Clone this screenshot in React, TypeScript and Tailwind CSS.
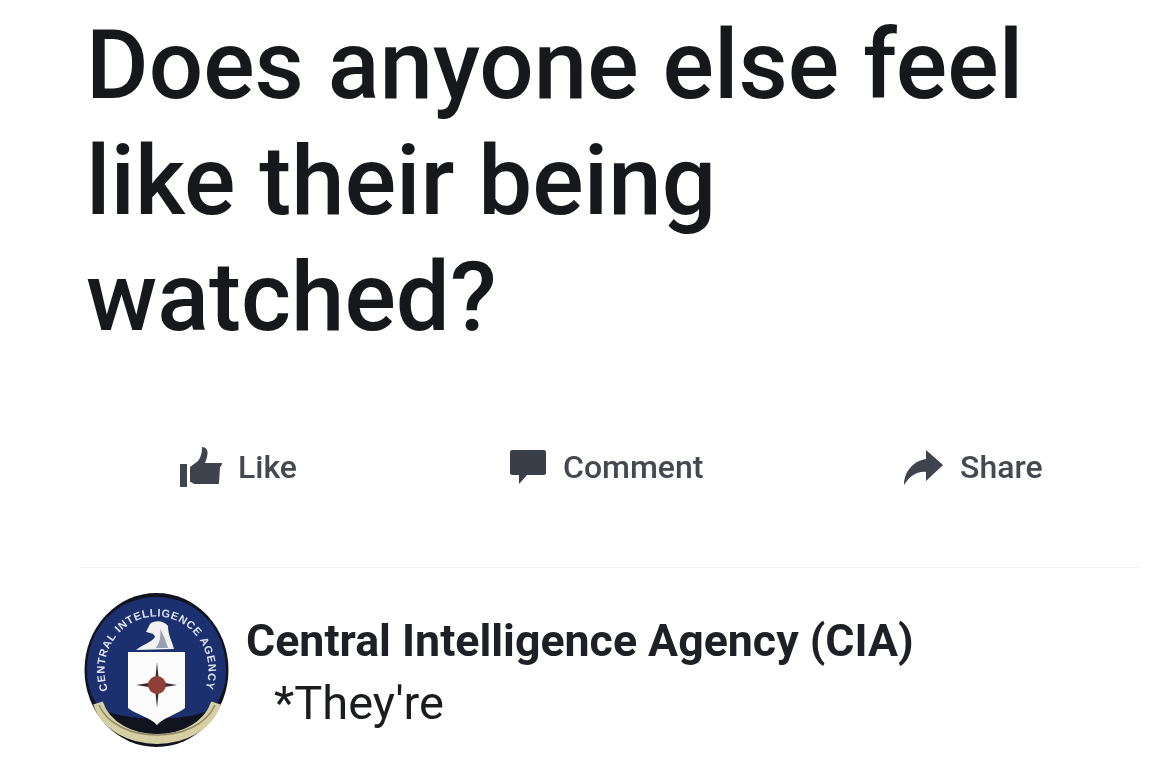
import React from 'react';

const LikeIcon = () => (
  <svg width="42" height="40" viewBox="0 0 42 40" fill="#3f434d">
    <rect x="0" y="17" width="7" height="23" />
    <path d="M10 20 L18 14 C21 10 22 6 22 0 C26 0 28 3 27.500 7 C27 11 26 13 25 16 L42 16 C42 18 41 19 40 20 L39 36 C39 37 38 37 37 37 L15 37 C13 37 12 35 10 35 Z" />
  </svg>
);

const CommentIcon = () => (
  <svg width="36" height="34" viewBox="0 0 36 34" fill="#3a3e48">
    <path d="M2 0 L34 0 C35 0 36 1 36 2 L36 23 C36 24 35 25 34 25 L17 25 L9 34 L9 25 L2 25 C1 25 0 24 0 23 L0 2 C0 1 1 0 2 0 Z" />
  </svg>
);

const ShareIcon = () => (
  <svg width="40" height="35" viewBox="0 0 40 35" fill="#3f434d">
    <path d="M23 0 L40 15 L23 31 L23 22 C14 21 7 26 1 35 C1 22 10 11 23 9 Z" />
  </svg>
);

const CiaSeal = () => (
  <svg width="148" height="156" viewBox="0 -3 148 156" className="shrink-0">
    <defs>
      <path id="sealArc" d="M 24 95 A 52 54 0 1 1 121 95" />
    </defs>
    <ellipse cx="72.500" cy="75" rx="72" ry="77" fill="#11141f" />
    <path d="M3 75 C3 33 33 2 72.500 2 C112 2 142 33 142 75 C142 90 138 100 132 110 C118 128 28 128 13 110 C7 100 3 90 3 75 Z" fill="#1c2f6e" />
    <path d="M14 108 C30 156 116 156 132 108" fill="none" stroke="#d6cfa4" strokeWidth="10" />
    <path d="M15 110 C32 150 114 150 131 110" fill="none" stroke="#8f8a68" strokeWidth="1.500" />
    <text fontFamily="'Liberation Sans', sans-serif" fontSize="11" fontWeight="700" fill="#dde2f0">
      <textPath href="#sealArc" textLength="204" lengthAdjust="spacing">CENTRAL INTELLIGENCE AGENCY</textPath>
    </text>
    <path d="M66 29 C70 25 80 25 84 31 C84 40 88 46 90 54 L52 55 C58 50 68 47 71 42 C70 38 66 38 62 37 Z" fill="#f2f2f2" />
    <path d="M76 34 C80 40 82 47 84 53 L72 53 C76 47 77 41 76 34 Z" fill="#9aa0b4" />
    <path d="M44 57 L101 57 L101 113 C92 120 80 122 73 130 C66 122 53 120 44 113 Z" fill="#fbfbfb" />
    <path d="M73 67 L75 87 L93 90 L75 93 L73 113 L71 93 L52 90 L71 87 Z" fill="#3a2a33" />
    <circle cx="73" cy="90" r="9" fill="#8f3f38" />
  </svg>
);

const Action = ({ icon, label, className }: { icon: React.ReactNode; label: string; className: string }) => (
  <div className={`flex items-center ${className}`}>
    {icon}
    <span className="text-[32px] font-medium text-[#45484f]">{label}</span>
  </div>
);

export default function App() {
  return (
    <div className="w-[1170px] h-[766px] overflow-hidden bg-white font-['Roboto',sans-serif] blur-[0.6px]">
      <h1 className="pl-[86px] pt-[7px] text-[96px] leading-[116px] font-medium text-[#17181c]">
        Does anyone else feel
        <br />
        like their being
        <br />
        watched?
      </h1>

      <div className="flex pl-[180px] mt-[90px] h-[44px]">
        <Action icon={<LikeIcon />} label="Like" className="w-[330px] gap-[16px]" />
        <Action icon={<CommentIcon />} label="Comment" className="w-[393px] gap-[17px]" />
        <Action icon={<ShareIcon />} label="Share" className="gap-[17px]" />
      </div>

      <div className="ml-[80px] mr-[30px] mt-[78px] h-px bg-[#f3f3f3]" />

      <div className="flex pl-[84px] pt-[24px]">
        <CiaSeal />
        <div className="pl-[14px] pt-[25px]">
          <div className="text-[44.700px] leading-[48px] font-bold text-[#1e2025]">Central Intelligence Agency (CIA)</div>
          <div className="pl-[28px] pt-[12px] text-[47px] leading-[52px] text-[#1b1c20]">*They're</div>
        </div>
      </div>
    </div>
  );
}
